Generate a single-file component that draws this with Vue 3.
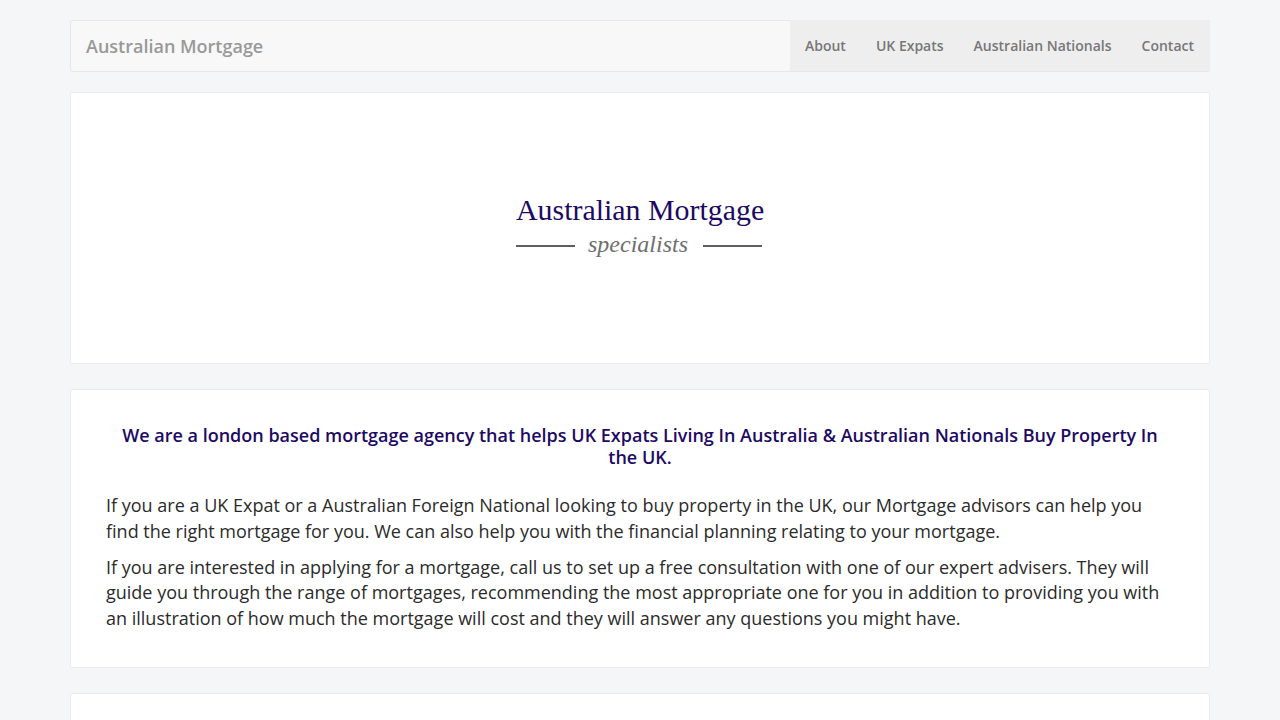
<template>
  <div class="page">
    <nav class="navbar">
      <a class="brand">Australian Mortgage</a>
      <ul class="nav-links">
        <li v-for="link in links" :key="link">{{ link }}</li>
      </ul>
    </nav>

    <section class="card logo-card">
      <div class="logo">
        <div class="logo-name">Australian Mortgage</div>
        <div class="logo-sub">
          <span class="rule"></span>
          <span class="logo-tag">specialists</span>
          <span class="rule"></span>
        </div>
      </div>
    </section>

    <section class="card intro">
      <h1>We are a london based mortgage agency that helps UK Expats Living In Australia &amp; Australian Nationals Buy Property In the UK.</h1>
      <p v-for="(para, idx) in paragraphs" :key="idx">{{ para }}</p>
    </section>

    <section class="card next"></section>
  </div>
</template>

<script setup>
const links = ['About', 'UK Expats', 'Australian Nationals', 'Contact']
const paragraphs = [
  'If you are a UK Expat or a Australian Foreign National looking to buy property in the UK, our Mortgage advisors can help you find the right mortgage for you. We can also help you with the financial planning relating to your mortgage.',
  'If you are interested in applying for a mortgage, call us to set up a free consultation with one of our expert advisers. They will guide you through the range of mortgages, recommending the most appropriate one for you in addition to providing you with an illustration of how much the mortgage will cost and they will answer any questions you might have.',
]
</script>

<style>
html, body { background: #f5f6f8; overflow: hidden; }
</style>

<style scoped>
.page {
  width: 1140px;
  height: 720px;
  overflow: hidden;
  margin: 0 auto;
  padding-top: 20px;
  box-sizing: border-box;
  font-family: "Open Sans", "Liberation Sans", sans-serif;
  color: #2b2b2b;
}
.navbar {
  display: flex;
  justify-content: space-between;
  height: 52px;
  box-sizing: border-box;
  background: #f8f8f8;
  border: 1px solid #e7e7e7;
  border-radius: 2px;
  margin-bottom: 20px;
}
.brand {
  padding-left: 15px;
  font-size: 18px;
  font-weight: 600;
  line-height: 50px;
  color: #999;
}
.nav-links {
  display: flex;
  list-style: none;
  margin: -1px -1px 0 0;
  padding: 0 1px 0 0;
  background: #eeeeee;
}
.nav-links li {
  padding: 0 15px;
  font-size: 14px;
  font-weight: 600;
  line-height: 52px;
  color: #777;
}
.card {
  background: #fff;
  border: 1px solid #e8ecec;
  border-radius: 2px;
  box-sizing: border-box;
}
.logo-card {
  height: 272px;
  margin-bottom: 25px;
  display: flex;
  align-items: center;
  justify-content: center;
}
.logo {
  width: 248px;
  margin-top: -6px;
  font-family: "Liberation Serif", serif;
}
.logo-name {
  font-size: 29.9px;
  line-height: 35px;
  color: #1d0a63;
  white-space: nowrap;
}
.logo-sub {
  display: flex;
  align-items: center;
  justify-content: space-between;
  width: 246px;
  margin-top: 2px;
}
.logo-tag {
  font-size: 24px;
  line-height: 30px;
  font-style: italic;
  color: #6e6e6e;
  margin-left: -2px;
}
.rule {
  width: 59px;
  height: 2px;
  margin-top: 4px;
  background: #5f5f5f;
}
.intro {
  height: 279px;
  margin-bottom: 25px;
  padding: 34px 35px 0;
}
h1 {
  margin: 0 0 25px;
  font-size: 18px;
  font-weight: 600;
  line-height: 22px;
  text-align: center;
  color: #1d0a63;
}
p {
  margin: 0 0 10.4px;
  font-size: 18px;
  line-height: 25.6px;
}
.next {
  height: 60px;
}
</style>
